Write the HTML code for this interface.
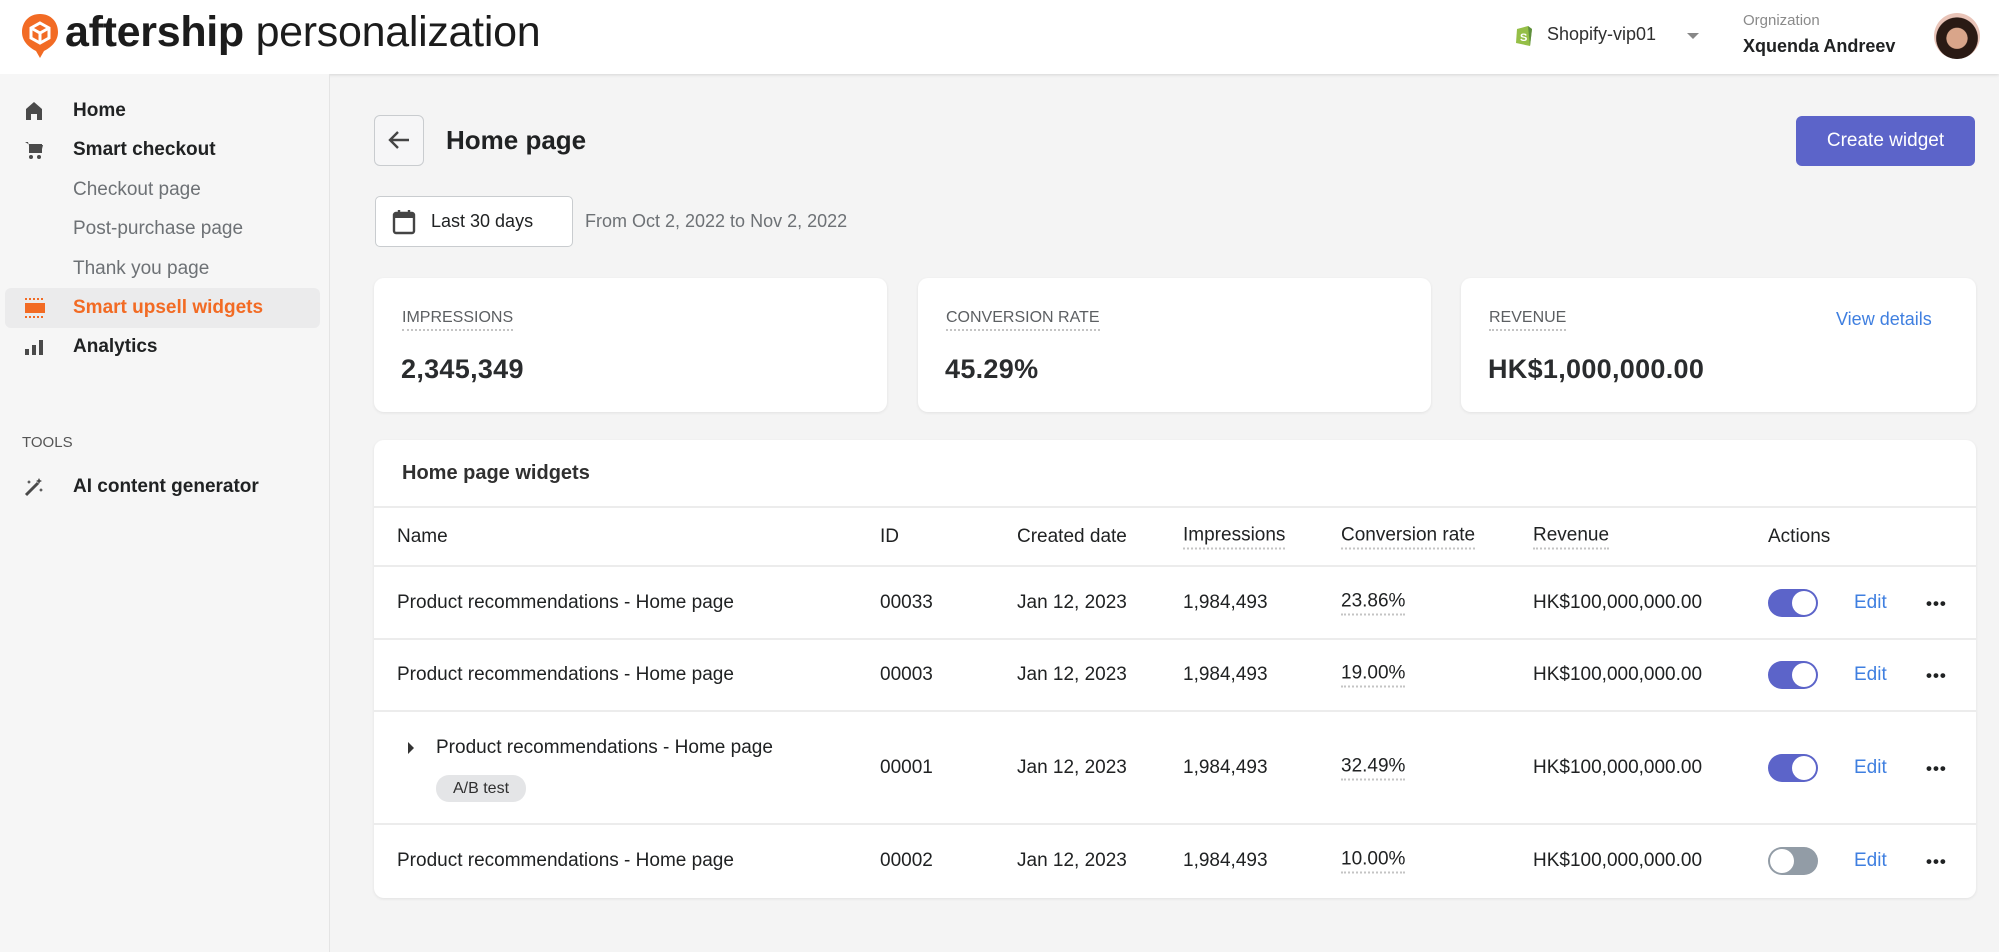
<!DOCTYPE html>
<html><head><meta charset="utf-8"><style>
*{box-sizing:border-box;margin:0;padding:0}
body{width:1999px;height:952px;overflow:hidden;background:#f4f4f4;font-family:"Liberation Sans",sans-serif;color:#202223;position:relative}
.a{position:absolute;white-space:nowrap}
.hdr{position:absolute;left:0;top:0;width:1999px;height:74px;background:#fff;box-shadow:0 1px 3px rgba(0,0,0,.12)}
.side{position:absolute;left:0;top:74px;width:330px;height:878px;background:#f6f6f6;border-right:1px solid #e4e4e4}
.nav{font-size:19px;font-weight:bold;color:#202223;transform:translateY(-50%)}
.sub{font-size:19px;color:#6d7175;transform:translateY(-50%)}
.card{position:absolute;background:#fff;border-radius:10px;box-shadow:0 1px 3px rgba(0,0,0,.08)}
.lbl{font-size:16px;color:#5c5f62;border-bottom:2px dotted #c4c4c4;padding-bottom:2px}
.val{font-size:27px;font-weight:bold;color:#2a2c2e;letter-spacing:0.3px}
.t{font-size:19px;transform:translateY(-50%)}
.u{border-bottom:2px dotted #c4c4c4;padding-bottom:1px}
.line{position:absolute;left:374px;width:1602px;height:2px;background:#ececec}
.tg{position:absolute;width:50px;height:28px;border-radius:14px;background:#5c64c9}
.tg::after{content:"";position:absolute;right:2px;top:2px;width:24px;height:24px;border-radius:50%;background:#fff}
.tg.off{background:#929ca6}.tg.off::after{left:2px;right:auto}
.ed{color:#3f7fe0}
.dd{font-weight:bold;letter-spacing:1px;font-size:17px}
</style></head><body>
<div class="hdr"></div>
<svg class="a" style="left:20px;top:12px" width="40" height="48" viewBox="0 0 40 48"><path d="M20 2C9 2 2 10 2 20c0 10 8 16 14 19l4 7 4-7c6-3 14-9 14-19C38 10 31 2 20 2z" fill="#f26b24"/><path d="M20 11l9 5v10l-9 5-9-5V16z" fill="none" stroke="#fff" stroke-width="3"/><path d="M11 16l9 5 9-5M20 21v10" stroke="#fff" stroke-width="3" fill="none"/></svg>
<div class="a" style="left:65px;top:8px;font-size:43px;letter-spacing:-0.3px;color:#1c1c1c"><b>aftership</b> <span style="font-weight:normal">personalization</span></div>
<svg class="a" style="left:1514px;top:23px" width="20" height="24" viewBox="0 0 20 24"><path d="M3 6l11-3 4 3-2 17-14-3z" fill="#95bf47"/><path d="M14 3l4 3-2 17" fill="#5e8e3e"/><text x="6" y="18" font-size="11" fill="#fff" font-family="Liberation Sans" font-weight="bold">S</text></svg>
<div class="a" style="left:1547px;top:24px;font-size:18px;color:#303030">Shopify-vip01</div>
<div class="a" style="left:1687px;top:33px;width:0;height:0;border-left:6px solid transparent;border-right:6px solid transparent;border-top:6px solid #888"></div>
<div class="a" style="left:1743px;top:12px;font-size:15px;color:#8a8a8a">Orgnization</div>
<div class="a" style="left:1743px;top:36px;font-size:18px;font-weight:bold;color:#202223">Xquenda Andreev</div>
<div class="a" style="left:1934px;top:13px;width:46px;height:46px;border-radius:50%;background:radial-gradient(circle at 50% 55%,#d9a58a 0 30%,#2a1a14 32% 60%,#e9c4b8 62%)"></div>

<div class="side"></div>
<div class="a" style="left:5px;top:288px;width:315px;height:40px;background:#ebebec;border-radius:6px"></div>
<svg class="a" style="left:25px;top:101px" width="18" height="20" viewBox="0 0 18 20"><path d="M9 1L1 8v11h5v-6h6v6h5V8z" fill="#4a4a4a"/></svg>
<svg class="a" style="left:24px;top:140px" width="20" height="20" viewBox="0 0 20 20"><path d="M1 2h3l3 11h10l2-8H6" fill="#4a4a4a"/><rect x="5" y="4" width="13" height="9" fill="#4a4a4a"/><circle cx="7" cy="17" r="2" fill="#4a4a4a"/><circle cx="15" cy="17" r="2" fill="#4a4a4a"/></svg>
<svg class="a" style="left:25px;top:298px" width="20" height="20" viewBox="0 0 20 20"><rect x="0" y="5" width="20" height="10" fill="#f26b24"/><path d="M0 1h20M0 19h20" stroke="#f26b24" stroke-width="2" stroke-dasharray="2 2"/></svg>
<svg class="a" style="left:25px;top:339px" width="18" height="16" viewBox="0 0 18 16"><rect x="0" y="10" width="4" height="6" fill="#4a4a4a"/><rect x="7" y="6" width="4" height="10" fill="#4a4a4a"/><rect x="14" y="1" width="4" height="15" fill="#4a4a4a"/></svg>
<svg class="a" style="left:24px;top:477px" width="20" height="20" viewBox="0 0 20 20"><path d="M2 18L14 6" stroke="#4a4a4a" stroke-width="3"/><path d="M15 1l1 2 2 1-2 1-1 2-1-2-2-1 2-1zM5 3l.7 1.3L7 5l-1.3.7L5 7l-.7-1.3L3 5l1.3-.7zM17 11l.7 1.3 1.3.7-1.3.7L17 15l-.7-1.3-1.3-.7 1.3-.7z" fill="#4a4a4a"/></svg>
<div class="a nav" style="left:73px;top:111px">Home</div>
<div class="a nav" style="left:73px;top:150px">Smart checkout</div>
<div class="a sub" style="left:73px;top:190px">Checkout page</div>
<div class="a sub" style="left:73px;top:229px">Post-purchase page</div>
<div class="a sub" style="left:73px;top:269px">Thank you page</div>
<div class="a nav" style="left:73px;top:308px;color:#f26b24">Smart upsell widgets</div>
<div class="a nav" style="left:73px;top:347px">Analytics</div>
<div class="a" style="left:22px;top:434px;font-size:15px;color:#555">TOOLS</div>
<div class="a nav" style="left:73px;top:487px">AI content generator</div>

<div class="a" style="left:374px;top:115px;width:50px;height:51px;border:1px solid #c9cccf;border-radius:6px;background:#f6f6f7"></div>
<svg class="a" style="left:387px;top:129px" width="24" height="22" viewBox="0 0 24 22"><path d="M22 11H3M11 3l-8 8 8 8" stroke="#444" stroke-width="2.4" fill="none"/></svg>
<div class="a" style="left:446px;top:125px;font-size:26px;font-weight:bold;color:#202223">Home page</div>
<div class="a" style="left:1796px;top:116px;width:179px;height:50px;background:#5c64c9;border-radius:6px;color:#fff;font-size:19px;text-align:center;line-height:50px">Create widget</div>

<div class="a" style="left:375px;top:196px;width:198px;height:51px;border:1px solid #c9cccf;border-radius:5px;background:#fff"></div>
<svg class="a" style="left:392px;top:209px" width="24" height="26" viewBox="0 0 24 26"><rect x="2" y="4" width="20" height="20" rx="2" fill="none" stroke="#444" stroke-width="2.4"/><rect x="2" y="4" width="20" height="5" fill="#444"/><path d="M7 1v5M17 1v5" stroke="#444" stroke-width="2.4"/></svg>
<div class="a" style="left:431px;top:211px;font-size:18px;color:#202223">Last 30 days</div>
<div class="a" style="left:585px;top:211px;font-size:18px;color:#6d7175">From Oct 2, 2022 to Nov 2, 2022</div>

<div class="card" style="left:374px;top:278px;width:513px;height:134px"></div>
<div class="card" style="left:918px;top:278px;width:513px;height:134px"></div>
<div class="card" style="left:1461px;top:278px;width:515px;height:134px"></div>
<div class="a lbl" style="left:402px;top:309px">IMPRESSIONS</div>
<div class="a lbl" style="left:946px;top:309px">CONVERSION RATE</div>
<div class="a lbl" style="left:1489px;top:309px">REVENUE</div>
<div class="a ed" style="left:1836px;top:309px;font-size:18px">View details</div>
<div class="a val" style="left:401px;top:354px">2,345,349</div>
<div class="a val" style="left:945px;top:354px">45.29%</div>
<div class="a val" style="left:1488px;top:354px">HK$1,000,000.00</div>

<div class="card" style="left:374px;top:440px;width:1602px;height:458px"></div>
<div class="a" style="left:402px;top:462px;font-size:20px;font-weight:bold;color:#303030">Home page widgets</div>
<div class="line" style="top:506px"></div>
<div class="line" style="top:565px"></div>
<div class="line" style="top:638px"></div>
<div class="line" style="top:710px"></div>
<div class="line" style="top:823px"></div>

<div class="a t" style="left:397px;top:537px">Name</div>
<div class="a t" style="left:880px;top:537px">ID</div>
<div class="a t" style="left:1017px;top:537px">Created date</div>
<div class="a t u" style="left:1183px;top:537px">Impressions</div>
<div class="a t u" style="left:1341px;top:537px">Conversion rate</div>
<div class="a t u" style="left:1533px;top:537px">Revenue</div>
<div class="a t" style="left:1768px;top:537px">Actions</div>

<div class="a t" style="left:397px;top:603px">Product recommendations - Home page</div>
<div class="a t" style="left:880px;top:603px">00033</div><div class="a t" style="left:1017px;top:603px">Jan 12, 2023</div><div class="a t" style="left:1183px;top:603px">1,984,493</div><div class="a t u" style="left:1341px;top:603px">23.86%</div><div class="a t" style="left:1533px;top:603px">HK$100,000,000.00</div>
<div class="tg" style="left:1768px;top:589px"></div><div class="a t ed" style="left:1854px;top:603px">Edit</div><div class="a t dd" style="left:1926px;top:604px">•••</div>

<div class="a t" style="left:397px;top:675px">Product recommendations - Home page</div>
<div class="a t" style="left:880px;top:675px">00003</div><div class="a t" style="left:1017px;top:675px">Jan 12, 2023</div><div class="a t" style="left:1183px;top:675px">1,984,493</div><div class="a t u" style="left:1341px;top:675px">19.00%</div><div class="a t" style="left:1533px;top:675px">HK$100,000,000.00</div>
<div class="tg" style="left:1768px;top:661px"></div><div class="a t ed" style="left:1854px;top:675px">Edit</div><div class="a t dd" style="left:1926px;top:676px">•••</div>

<div class="a" style="left:408px;top:742px;width:0;height:0;border-top:6px solid transparent;border-bottom:6px solid transparent;border-left:6px solid #333"></div>
<div class="a t" style="left:436px;top:748px">Product recommendations - Home page</div>
<div class="a" style="left:436px;top:775px;width:90px;height:27px;border-radius:13px;background:#e4e5e7;font-size:16px;line-height:27px;text-align:center;color:#303030">A/B test</div>
<div class="a t" style="left:880px;top:768px">00001</div><div class="a t" style="left:1017px;top:768px">Jan 12, 2023</div><div class="a t" style="left:1183px;top:768px">1,984,493</div><div class="a t u" style="left:1341px;top:768px">32.49%</div><div class="a t" style="left:1533px;top:768px">HK$100,000,000.00</div>
<div class="tg" style="left:1768px;top:754px"></div><div class="a t ed" style="left:1854px;top:768px">Edit</div><div class="a t dd" style="left:1926px;top:769px">•••</div>

<div class="a t" style="left:397px;top:861px">Product recommendations - Home page</div>
<div class="a t" style="left:880px;top:861px">00002</div><div class="a t" style="left:1017px;top:861px">Jan 12, 2023</div><div class="a t" style="left:1183px;top:861px">1,984,493</div><div class="a t u" style="left:1341px;top:861px">10.00%</div><div class="a t" style="left:1533px;top:861px">HK$100,000,000.00</div>
<div class="tg off" style="left:1768px;top:847px"></div><div class="a t ed" style="left:1854px;top:861px">Edit</div><div class="a t dd" style="left:1926px;top:862px">•••</div>
</body></html>
